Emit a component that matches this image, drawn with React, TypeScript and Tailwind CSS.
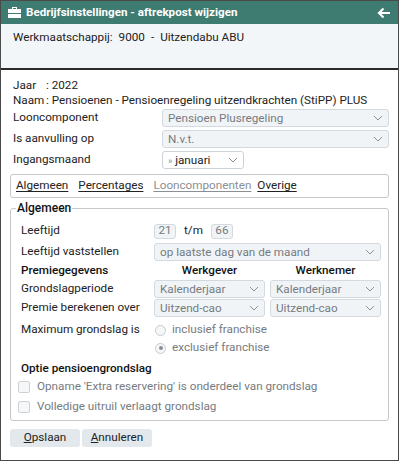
import React from "react";

const font = { fontFamily: "Roboto, 'Liberation Sans', sans-serif" };

function Chevron() {
  return (
    <svg width="10" height="6" viewBox="0 0 10 6" className="shrink-0">
      <path d="M1 1 L5 5 L9 1" fill="none" stroke="#8a9096" strokeWidth="1" />
    </svg>
  );
}

function Select({
  value,
  disabled = true,
  className = "",
  prefix,
}: {
  value: string;
  disabled?: boolean;
  className?: string;
  prefix?: boolean;
}) {
  return (
    <div
      className={`flex h-[18px] items-center justify-between rounded-[3px] border pl-[5px] pr-[5px] ${
        disabled ? "border-[#d3d9de] bg-[#f1f4f7] text-[#767b80]" : "border-[#ccd3d9] bg-white text-[#222]"
      } ${className}`}
    >
      <span className="whitespace-nowrap leading-[16px]">
        {prefix && <span className="mr-[3px] text-[9px] text-[#6d8fb3]">»</span>}
        {value}
      </span>
      <Chevron />
    </div>
  );
}

function Row({ label, children, w = "w-[149px]" }: { label: string; children: React.ReactNode; w?: string }) {
  return (
    <div className="flex h-[18px] items-center">
      <div className={`${w} shrink-0 text-[#222]`}>{label}</div>
      {children}
    </div>
  );
}

function NumBox({ value }: { value: string }) {
  return (
    <div className="flex h-[15px] w-[22px] items-center justify-center rounded-[3px] border border-[#d3d9de] bg-[#f1f4f7] text-[#767b80]">
      {value}
    </div>
  );
}

export default function App() {
  return (
    <div style={font} className="flex h-[461px] w-[399px] flex-col border border-[#4a4a4a] bg-white text-[11.7px]">
      {/* titelbalk */}
      <div className="flex h-[23px] shrink-0 items-center justify-between bg-[#3e7b71] pl-[7px] pr-[7px]">
        <div className="flex items-center gap-[5px]">
          <svg width="13" height="11" viewBox="0 0 13 11">
            <path d="M4 0 H9 V2 H8 V1 H5 V2 H4 Z" fill="white" />
            <rect x="0" y="2" width="13" height="4" fill="white" />
            <rect x="0" y="7" width="13" height="4" fill="white" />
          </svg>
          <span className="text-[11.6px] font-bold text-white">Bedrijfsinstellingen - aftrekpost wijzigen</span>
        </div>
        <svg width="14" height="12" viewBox="0 0 14 12">
          <path d="M13 6 H2 M6.5 1.5 L2 6 L6.5 10.5" fill="none" stroke="white" strokeWidth="2.2" />
        </svg>
      </div>

      {/* werkmaatschappij */}
      <div className="flex h-[46px] shrink-0 items-start gap-[6px] border-b-[2px] border-[#2b2b2b] bg-[#f3f6f9] px-[12px] pt-[5px] text-[#222]">
        <span>Werkmaatschappij:</span>
        <span>9000</span>
        <span>-</span>
        <span>Uitzendabu ABU</span>
      </div>

      <div className="flex flex-col pl-[9px] pr-[9px] pt-[8px] text-[#222]">
        <div className="pl-[3px] leading-[15px]">
          <div className="flex">
            <span className="w-[33px] shrink-0">Jaar</span>
            <span>: 2022</span>
          </div>
          <div className="flex">
            <span className="w-[33px] shrink-0 whitespace-nowrap">Naam </span>
            <span className="whitespace-nowrap">: Pensioenen - Pensioenregeling uitzendkrachten (StiPP) PLUS</span>
          </div>
        </div>

        <div className="mt-[1px] flex flex-col gap-[3px] pl-[3px]">
          <Row label="Looncomponent">
            <Select value="Pensioen Plusregeling" className="flex-1" />
          </Row>
          <Row label="Is aanvulling op">
            <Select value="N.v.t." className="flex-1" />
          </Row>
          <Row label="Ingangsmaand">
            <Select value="januari" disabled={false} prefix className="w-[82px]" />
          </Row>
        </div>

        {/* tabs */}
        <div className="mt-[5px] flex h-[24px] items-center gap-[10px] rounded-[3px] border border-[#c3c8cc] px-[5px]">
          <span className="text-[#222] underline underline-offset-2">Algemeen</span>
          <span className="text-[#222] underline underline-offset-2">Percentages</span>
          <span className="text-[#8a8f93] underline underline-offset-2">Looncomponenten</span>
          <span className="-ml-[4px] text-[#222] underline underline-offset-2">Overige</span>
        </div>

        {/* fieldset */}
        <fieldset className="mt-[2px] rounded-[3px] border border-[#c3c8cc] pb-[5px] pl-[10px] pr-[7px]">
          <legend className="-ml-[5px] px-[1px] text-[12px] font-medium leading-[16px] text-[#111]">Algemeen</legend>

          <div className="mt-[6px] flex h-[18px] items-center">
            <div className="w-[133px] shrink-0">Leeftijd</div>
            <NumBox value="21" />
            <span className="ml-[8px] mr-[8px]">t/m</span>
            <NumBox value="66" />
          </div>
          <div className="mt-[3px]">
            <Row label="Leeftijd vaststellen" w="w-[133px]">
              <Select value="op laatste dag van de maand" className="flex-1" />
            </Row>
          </div>

          <div className="mt-[2px] flex h-[15px] items-center font-medium text-[#111]">
            <div className="w-[133px] shrink-0">Premiegegevens</div>
            <div className="flex-1 text-center">Werkgever</div>
            <div className="ml-[5px] flex-1 text-center">Werknemer</div>
          </div>
          <div className="mt-[2px] flex flex-col gap-[1px]">
            <Row label="Grondslagperiode" w="w-[133px]">
              <div className="flex flex-1 gap-[5px]">
                <Select value="Kalenderjaar" className="flex-1" />
                <Select value="Kalenderjaar" className="flex-1" />
              </div>
            </Row>
            <Row label="Premie berekenen over" w="w-[133px]">
              <div className="flex flex-1 gap-[5px]">
                <Select value="Uitzend-cao" className="flex-1" />
                <Select value="Uitzend-cao" className="flex-1" />
              </div>
            </Row>
          </div>

          <div className="mt-[4px] flex flex-col">
            <div className="flex h-[18px] items-center">
              <div className="w-[134px] shrink-0">Maximum grondslag is</div>
              <span className="mr-[6px] h-[11px] w-[11px] rounded-full border border-[#c6cbcf] bg-[#f6f7f8]" />
              <span className="text-[#767b80]">inclusief franchise</span>
            </div>
            <div className="flex h-[18px] items-center">
              <div className="w-[134px] shrink-0" />
              <span className="mr-[6px] flex h-[11px] w-[11px] items-center justify-center rounded-full border border-[#c6cbcf] bg-[#f6f7f8]">
                <span className="h-[4px] w-[4px] rounded-full bg-[#8a8f94]" />
              </span>
              <span className="text-[#767b80]">exclusief franchise</span>
            </div>
          </div>

          <div className="mt-[4px] flex h-[15px] items-center font-medium text-[#111]">Optie pensioengrondslag</div>
          <div className="mt-[3px] flex flex-col gap-[4px] text-[#767b80]">
            <div className="-ml-[3px] flex h-[16px] items-center">
              <span className="mr-[7px] h-[12px] w-[12px] rounded-[2px] border border-[#cdd2d6] bg-[#f6f7f8]" />
              Opname 'Extra reservering' is onderdeel van grondslag
            </div>
            <div className="-ml-[3px] flex h-[16px] items-center">
              <span className="mr-[7px] h-[12px] w-[12px] rounded-[2px] border border-[#cdd2d6] bg-[#f6f7f8]" />
              Volledige uitruil verlaagt grondslag
            </div>
          </div>
        </fieldset>

        <div className="mt-[8px] flex gap-[2px]">
          <button className="h-[18px] w-[70px] rounded-[3px] bg-[#e3e8ec] text-[#222]">
            <span className="underline">O</span>pslaan
          </button>
          <button className="h-[18px] w-[70px] rounded-[3px] bg-[#e3e8ec] text-[#222]">
            <span className="underline">A</span>nnuleren
          </button>
        </div>
      </div>
    </div>
  );
}
